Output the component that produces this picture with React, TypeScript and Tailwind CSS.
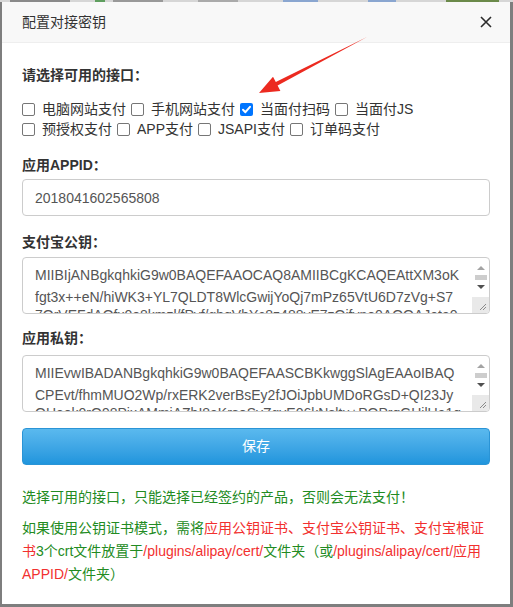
import { useState } from 'react';

const font = "font-['Liberation_Sans','Noto_Sans_CJK_SC',sans-serif]";

const row1 = [
  { key: 'pc', label: '电脑网站支付' },
  { key: 'wap', label: '手机网站支付' },
  { key: 'f2f', label: '当面付扫码' },
  { key: 'f2fjs', label: '当面付JS' },
];

const row2 = [
  { key: 'pre', label: '预授权支付' },
  { key: 'app', label: 'APP支付' },
  { key: 'jsapi', label: 'JSAPI支付' },
  { key: 'order', label: '订单码支付' },
];

function Box({ checked }: { checked: boolean }) {
  return checked ? (
    <span className="flex h-[13px] w-[13px] items-center justify-center rounded-[2px] bg-[#0075ff]">
      <svg width="11" height="11" viewBox="0 0 11 11" fill="none">
        <path d="M2 5.8 L4.4 8.2 L9 2.8" stroke="#fff" strokeWidth="2" strokeLinecap="round" strokeLinejoin="round" />
      </svg>
    </span>
  ) : (
    <span className="block h-[13px] w-[13px] rounded-[2px] border border-[#767676] bg-white" />
  );
}

function FakeScrollbar() {
  return (
    <div className="flex w-[17px] shrink-0 flex-col">
      <div className="flex h-[15px] items-end justify-center pb-[3px]">
        <span className="h-0 w-0 border-x-[4px] border-b-[4px] border-x-transparent border-b-[#a3a3a3]" />
      </div>
      <div className="flex h-[9px] items-center justify-center">
        <span className="block h-[5px] w-[12px] bg-[#cdcdcd]" />
      </div>
      <div className="flex h-[15px] items-start justify-center pt-[3px]">
        <span className="h-0 w-0 border-x-[4px] border-t-[4px] border-x-transparent border-t-[#505050]" />
      </div>
      <div className="relative flex-1 bg-[#e9e9e9]">
        <svg className="absolute bottom-[2px] right-[2px]" width="8" height="8" viewBox="0 0 8 8">
          <path d="M7 1 L1 7 M7 4 L4 7" stroke="#8a8a8a" strokeWidth="1" />
        </svg>
      </div>
    </div>
  );
}

function KeyBox({ lines }: { lines: string[] }) {
  return (
    <div className="flex h-[57px] overflow-hidden rounded-[4px] border border-[#ccc] bg-white">
      <div className="flex-1 overflow-hidden whitespace-nowrap pl-[12px] pt-[6px] text-[14px] leading-[22px] text-[#555]">
        <div>{lines[0]}</div>
        <div>{lines[1]}</div>
        {/* the third line only peeks out under the bottom edge */}
        <div className="-mt-[4px]">{lines[2]}</div>
      </div>
      <FakeScrollbar />
    </div>
  );
}

export default function App() {
  const [checked, setChecked] = useState<Record<string, boolean>>({ f2f: true });

  const renderRow = (items: { key: string; label: string }[]) => (
    <div className="flex h-[20px] items-center">
      {items.map((it) => (
        <label
          key={it.key}
          className="mr-[5px] flex cursor-pointer items-center"
          onClick={() => setChecked((c) => ({ ...c, [it.key]: !c[it.key] }))}
        >
          <span className="mr-[7px]">
            <Box checked={!!checked[it.key]} />
          </span>
          <span>{it.label}</span>
        </label>
      ))}
    </div>
  );

  return (
    <div className={`relative h-[607px] w-[513px] overflow-hidden bg-[#7e7e7e] ${font}`}>
      {/* glimpse of the page behind the dialog */}
      <div className="flex h-[2px] bg-[#d6d6d6]">
        <span className="ml-[10px] w-[60px] bg-[#8a8a8a]" />
        <span className="ml-[25px] w-[10px] bg-[#5e9e5e]" />
        <span className="ml-[8px] w-[50px] bg-[#999]" />
        <span className="ml-[35px] w-[40px] bg-[#aaa]" />
        <span className="ml-[45px] w-[35px] bg-[#8aa6d0]" />
        <span className="ml-[50px] w-[28px] bg-[#8aa6d0]" />
        <span className="ml-[50px] w-[53px] bg-[#6b8a4a]" />
      </div>

      <div className="ml-[2px] flex h-[602px] w-[508px] flex-col bg-white text-[14px] text-[#333]">
        <div className="flex h-[41px] shrink-0 items-center justify-between border-b border-[#eee] bg-[#f8f8f8] pl-[20px] pr-[18px]">
          <span className="leading-[20px]">配置对接密钥</span>
          <svg width="12" height="12" viewBox="0 0 12 12">
            <path d="M1 1 L11 11 M11 1 L1 11" stroke="#2b2b2b" strokeWidth="1.6" />
          </svg>
        </div>

        <div className="px-[20px]">
          <div className="mt-[22px] font-bold leading-[20px]">请选择可用的接口：</div>
          <div className="mt-[14px]">
            {renderRow(row1)}
            {renderRow(row2)}
          </div>

          <div className="mt-[16px] font-bold leading-[20px]">应用APPID：</div>
          <input
            className="mt-[4px] block h-[37px] w-full rounded-[4px] border border-[#ccc] px-[12px] text-[14px] text-[#555] outline-none"
            defaultValue="2018041602565808"
          />

          <div className="mt-[16px] font-bold leading-[20px]">支付宝公钥：</div>
          <div className="mt-[5px]">
            <KeyBox
              lines={[
                'MIIBIjANBgkqhkiG9w0BAQEFAAOCAQ8AMIIBCgKCAQEAttXM3oK',
                'fgt3x++eN/hiWK3+YL7QLDT8WlcGwijYoQj7mPz65VtU6D7zVg+S7',
                '7QrVEFdAQfx0o8kmzl/fPvf/gbqVbYc8z488vE7zQifyno0AQOAJeta0',
              ]}
            />
          </div>

          <div className="mt-[14px] font-bold leading-[20px]">应用私钥：</div>
          <div className="mt-[7px]">
            <KeyBox
              lines={[
                'MIIEvwIBADANBgkqhkiG9w0BAQEFAASCBKkwggSlAgEAAoIBAQ',
                'CPEvt/fhmMUO2Wp/rxERK2verBsEy2fJOiJpbUMDoRGsD+QI23Jy',
                'OHeok0rQ98PixAMmjAZbI8aKrsoSyZgyE06kNsltu+POPrqGHjlUa1q',
              ]}
            />
          </div>

          <button
            type="button"
            className="mt-[16px] block h-[37px] w-full rounded-[4px] border border-[#2a94d6] bg-gradient-to-b from-[#5ab9ee] to-[#1f95dd] text-[14px] text-white"
          >
            保存
          </button>

          <p className="mt-[22px] leading-[20px] text-[#228b22]">
            选择可用的接口，只能选择已经签约的产品，否则会无法支付！
          </p>
          <p className="mt-[10px] leading-[23px] text-[#228b22]">
            如果使用公钥证书模式，需将
            <span className="text-[#f2302f]">应用公钥证书、支付宝公钥证书、支付宝根证书</span>
            3个crt文件放置于<span className="text-[#f2302f]">/plugins/alipay/cert/</span>
            文件夹（或<span className="text-[#f2302f]">/plugins/alipay/cert/应用APPID/</span>文件夹）
          </p>
        </div>
      </div>

      {/* annotation arrow */}
      <svg className="pointer-events-none absolute left-0 top-0" width="513" height="607">
        <polygon
          points="367,37 277.6,85.6 280.4,90.9 259,93 273,76.7 275.8,82"
          fill="#ec2a20"
        />
      </svg>
    </div>
  );
}
